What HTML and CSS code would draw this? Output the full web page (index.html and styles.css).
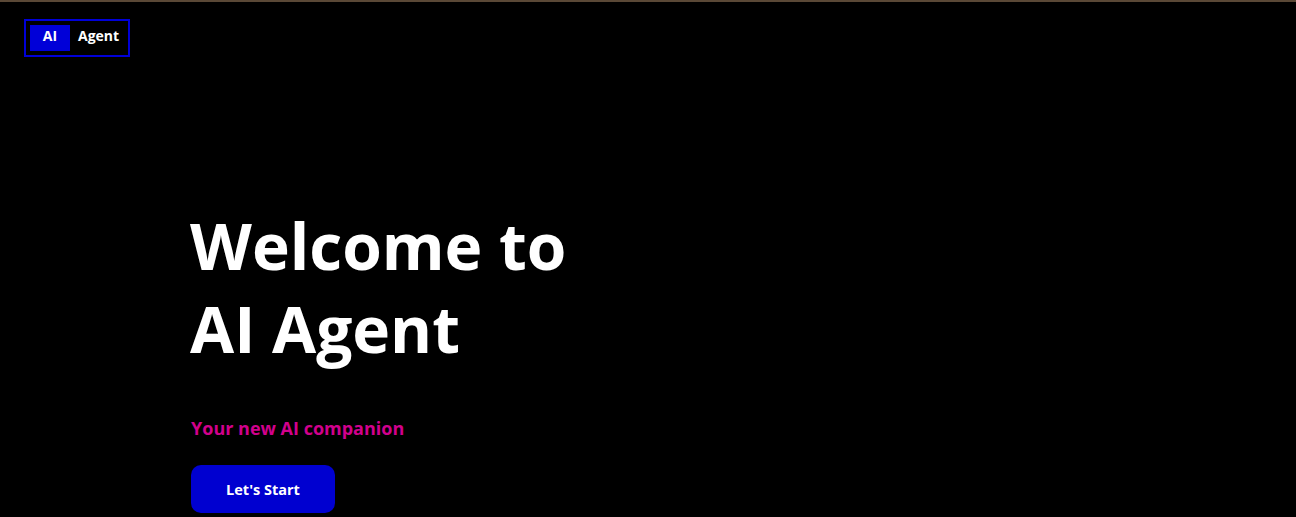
FILE: index.html
```html
<!DOCTYPE html>
<html lang="en">
<head>
<meta charset="utf-8">
<title>AI Agent</title>
<link rel="stylesheet" href="styles.css">
</head>
<body>
<div class="topline"></div>
<header class="navbar">
  <div class="logo"><span class="logo-ai">AI</span><span class="logo-agent">Agent</span></div>
</header>
<main class="hero">
  <h1 class="hero-title">Welcome to<br>AI Agent</h1>
  <p class="hero-sub">Your new AI companion</p>
  <button class="hero-btn">Let's Start</button>
</main>
</body>
</html>
```
FILE: styles.css
```css
* { box-sizing: border-box; }
html, body { margin: 0; padding: 0; }
body {
  background: #000;
  color: #fff;
  font-family: "Open Sans", "Liberation Sans", sans-serif;
  height: 517px;
  overflow: hidden;
}
.topline {
  height: 2px;
  background: #5a4836;
}
.navbar {
  padding: 17px 24px 0;
}
.logo {
  display: inline-flex;
  align-items: center;
  gap: 8px;
  border: 2px solid #0000d8;
  padding: 4px 9px 4px 4px;
  font-weight: 700;
  font-size: 14px;
}
.logo-ai {
  display: flex;
  align-items: center;
  justify-content: center;
  width: 40px;
  height: 26px;
  padding-bottom: 6px;
  background: #0000d8;
}
.logo-agent {
  padding-bottom: 6px;
}
.hero {
  padding: 147px 0 0 190px;
}
.hero-title {
  margin: 0;
  font-size: 64px;
  line-height: 1.3;
  font-weight: 700;
}
.hero-sub {
  margin: 46px 0 0 1px;
  font-size: 18px;
  font-weight: 700;
  color: #d1008c;
}
.hero-btn {
  display: block;
  margin: 25px 0 0 1px;
  width: 144px;
  height: 48px;
  border: none;
  border-radius: 10px;
  background: #0000d0;
  color: #fff;
  font-family: inherit;
  font-size: 14.5px;
  font-weight: 700;
}
```
